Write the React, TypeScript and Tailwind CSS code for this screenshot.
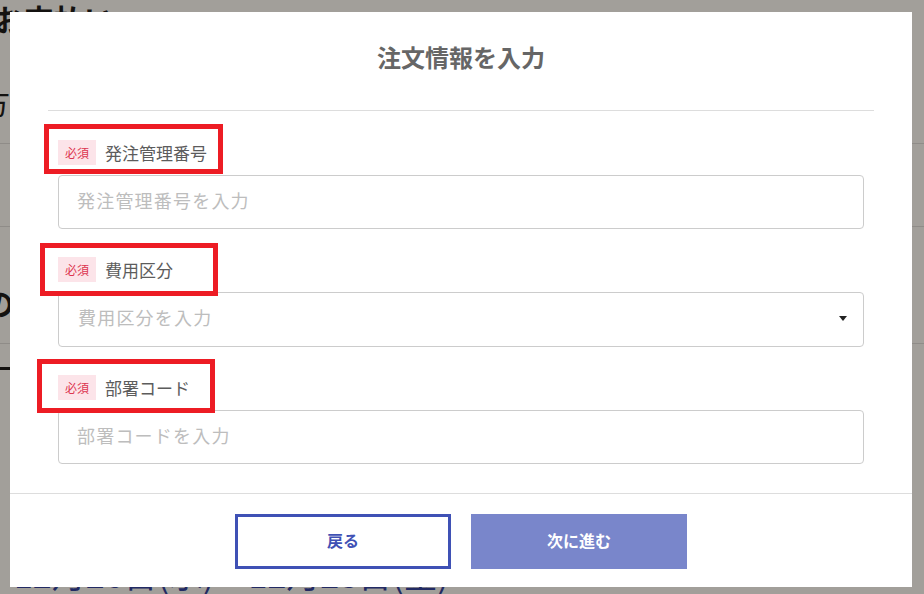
const jp = { fontFamily: '"Noto Sans CJK JP", "Noto Sans", sans-serif' };

type Field = {
  label: string;
  placeholder: string;
  select?: boolean;
};

const fields: Field[] = [
  { label: "発注管理番号", placeholder: "発注管理番号を入力" },
  { label: "費用区分", placeholder: "費用区分を入力", select: true },
  { label: "部署コード", placeholder: "部署コードを入力" },
];

function RequiredBadge() {
  return (
    <span className="flex h-[25px] w-[38px] items-center justify-center bg-[#fce4e9] text-[12px] leading-none text-[#dc3550]">
      必須
    </span>
  );
}

function FormField({ field }: { field: Field }) {
  return (
    <div className="flex flex-col">
      <div className="flex h-[25px] items-center gap-[9px]">
        <RequiredBadge />
        <span className="text-[17px] leading-none text-[#5c5c5c]">{field.label}</span>
      </div>
      {field.select ? (
        <div className="mt-[10px] flex h-[55px] items-center justify-between rounded-[4px] border border-[#cccccc] bg-white pb-[4px] pl-[19px] pr-[16px]">
          <span className="text-[18px] tracking-[1.2px] text-[#bdbdbd]">{field.placeholder}</span>
          <span className="mt-[2px] h-0 w-0 border-x-[4px] border-t-[5px] border-x-transparent border-t-[#222]" />
        </div>
      ) : (
        <input
          type="text"
          placeholder={field.placeholder}
          className="mt-[10px] h-[54px] w-full rounded-[4px] border border-[#cccccc] bg-white px-[18px] pb-[4px] text-[18px] tracking-[1.2px] text-[#333] outline-none placeholder:text-[#bdbdbd]"
          style={jp}
        />
      )}
    </div>
  );
}

function BackgroundPage() {
  return (
    <div className="flex h-full w-full flex-col bg-[#a29f9a] text-[#141210]">
      <div className="-ml-[6px] h-[40px] text-[30px] font-bold leading-[36px]">お支払い</div>
      <div className="h-[108px] border-b border-[#8f8c88] pt-[46px]">
        <span className="-ml-[20px] text-[30px] leading-[34px]">方法</span>
      </div>
      <div className="h-[87px] border-b border-[#8f8c88]" />
      <div className="h-[120px] border-b border-[#8f8c88] pt-[58px]">
        <span className="-ml-[16px] text-[30px] font-bold leading-[34px]">のこ</span>
      </div>
      <div className="h-[24px]" />
      <div className="h-[3px] w-[30px] bg-[#141210]" />
      <div className="h-[192px]" />
      <div className="pl-[14px] text-[34px] leading-[40px] text-[#222a63]">12月26日(水) ~ 12月28日(金)</div>
    </div>
  );
}

export default function App() {
  return (
    <div className="relative h-[594px] w-[924px] overflow-hidden" style={jp}>
      <BackgroundPage />

      {/* modal */}
      <div className="absolute left-[10px] top-[12px] flex h-[575px] w-[902px] flex-col bg-white">
        <div className="flex h-[98px] items-center justify-center pb-[8px]">
          <h2 className="text-[24px] font-bold leading-none text-[#666666]">注文情報を入力</h2>
        </div>
        <div className="mx-[38px] h-px bg-[#dddddd]" />

        <div className="flex flex-col gap-[28px] px-[48px] pb-[29px] pt-[29px]">
          {fields.map((f) => (
            <FormField key={f.label} field={f} />
          ))}
        </div>

        <div className="flex justify-center gap-[20px] border-t border-[#dddddd] pt-[20px]">
          <button className="h-[55px] w-[216px] border-[3px] border-[#3f51b5] bg-white pb-[3px] text-[16px] font-bold text-[#3f51b5]">
            戻る
          </button>
          <button className="h-[55px] w-[216px] bg-[#7986cb] pb-[3px] text-[16px] font-bold text-white">
            次に進む
          </button>
        </div>
      </div>

      {/* red annotation frames */}
      <div className="pointer-events-none absolute left-[44px] top-[124px] h-[50px] w-[179px] border-[5px] border-[#ed1c24]" />
      <div className="pointer-events-none absolute left-[40px] top-[243px] h-[53px] w-[178px] border-[5px] border-[#ed1c24]" />
      <div className="pointer-events-none absolute left-[37px] top-[359px] h-[54px] w-[178px] border-[5px] border-[#ed1c24]" />
    </div>
  );
}
